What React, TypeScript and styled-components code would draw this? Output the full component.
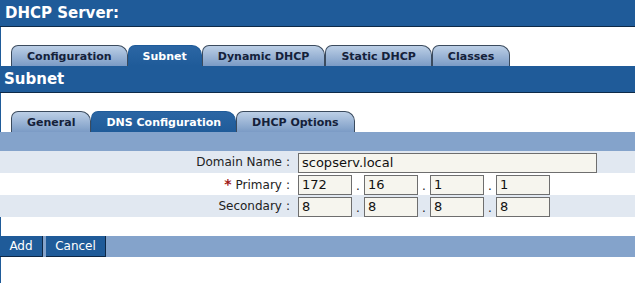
import React from "react";
import styled, { createGlobalStyle, css } from "styled-components";

const Global = createGlobalStyle`
  html, body { margin: 0; padding: 0; background: #ffffff; }
  body { font-family: "DejaVu Sans", Verdana, sans-serif; }
  * { box-sizing: border-box; }
`;

const Page = styled.div`
  width: 635px;
  height: 283px;
  overflow: hidden;
  background: #fff;
`;

const Header = styled.div`
  height: 27px;
  background: #1f5b99;
  border-bottom: 1px solid #0e2a48;
  color: #fff;
  font-weight: bold;
  font-size: 15px;
  padding: 4px 0 0 5px;
`;

const Body = styled.div`
  border-left: 1px solid #1f5b99;
  min-height: 256px;
`;

const TabStrip = styled.div<{ $top: number }>`
  display: flex;
  gap: 0;
  padding: ${(p) => p.$top}px 0 0 10px;
  height: ${(p) => p.$top + 21}px;
`;

const Tab = styled.div<{ $active?: boolean }>`
  height: 21px;
  padding: 0 ${(p) => (p.$active ? "14px" : "15px")};
  display: flex;
  align-items: center;
  justify-content: center;
  font-size: 11px;
  font-weight: bold;
  border: 1px solid #3b4b5e;
  border-bottom: none;
  border-radius: 7px 10px 0 0;
  color: #14213a;
  background: linear-gradient(#bccfe6, #7b9bc5);
  ${(p) =>
    p.$active &&
    css`
      color: #ffffff;
      border-color: #1f5b99;
      background: linear-gradient(#2b66a4, #1f5b99);
    `}
`;

const SectionBar = styled.div`
  height: 27px;
  margin-left: -1px;
  background: #1f5b99;
  border-bottom: 1px solid #0e2a48;
  color: #fff;
  font-weight: bold;
  font-size: 15px;
  padding: 4px 0 0 4px;
`;

const LightBar = styled.div<{ $h: number }>`
  height: ${(p) => p.$h}px;
  margin-left: -1px;
  background: #84a3cb;
  display: flex;
  align-items: stretch;
  gap: 3px;
`;

const Row = styled.div<{ $shade?: boolean }>`
  height: 22px;
  margin-left: -1px;
  display: grid;
  grid-template-columns: 292px 1fr;
  align-items: center;
  background: ${(p) => (p.$shade ? "#e1e8f1" : "#ffffff")};
  font-size: 12px;
  color: #222;
`;

const Label = styled.div`
  text-align: right;
  white-space: nowrap;
  padding-right: 2px;
`;

const Colon = styled.span`
  margin-left: 4px;
`;

const Star = styled.span`
  color: #a01818;
  font-weight: bold;
  font-size: 14px;
  margin-right: 4px;
`;

const Field = styled.div`
  display: flex;
  align-items: center;
  padding: 1px 0 0 6px;
`;

const TextInput = styled.input<{ $w: number }>`
  width: ${(p) => p.$w}px;
  height: 20px;
  border: 1px solid #6e6e6e;
  background: #f6f5ee;
  font-family: "DejaVu Sans", Verdana, sans-serif;
  font-size: 13px;
  color: #111;
  padding: 0 3px;
  margin: 0;
  outline: none;
`;

const Dot = styled.span`
  width: 12px;
  text-align: center;
  font-size: 12px;
  padding-top: 3px;
`;

const Spacer = styled.div`
  height: 19px;
`;

const Button = styled.button<{ $w: number }>`
  width: ${(p) => p.$w}px;
  height: 21px;
  margin: 0;
  border: none;
  border-right: 1px solid #0d2745;
  border-bottom: 1px solid #0d2745;
  background: #1f5b99;
  color: #fff;
  font-family: "DejaVu Sans", Verdana, sans-serif;
  font-size: 12px;
  padding: 0;
`;

const ip = (vals: string[]) => (
  <Field>
    {vals.map((v, i) => (
      <React.Fragment key={i}>
        {i > 0 && <Dot>.</Dot>}
        <TextInput $w={54} defaultValue={v} />
      </React.Fragment>
    ))}
  </Field>
);

export default function App() {
  return (
    <Page>
      <Global />
      <Header>DHCP Server:</Header>
      <Body>
        <TabStrip $top={18}>
          <Tab>Configuration</Tab>
          <Tab $active>Subnet</Tab>
          <Tab>Dynamic DHCP</Tab>
          <Tab>Static DHCP</Tab>
          <Tab>Classes</Tab>
        </TabStrip>
        <SectionBar>Subnet</SectionBar>
        <TabStrip $top={18}>
          <Tab>General</Tab>
          <Tab $active>DNS Configuration</Tab>
          <Tab>DHCP Options</Tab>
        </TabStrip>
        <LightBar $h={19} />
        <Row $shade>
          <Label>
            Domain Name<Colon>:</Colon>
          </Label>
          <Field>
            <TextInput $w={299} defaultValue="scopserv.local" />
          </Field>
        </Row>
        <Row>
          <Label>
            <Star>*</Star>Primary<Colon>:</Colon>
          </Label>
          {ip(["172", "16", "1", "1"])}
        </Row>
        <Row $shade>
          <Label>
            Secondary<Colon>:</Colon>
          </Label>
          {ip(["8", "8", "8", "8"])}
        </Row>
        <Spacer />
        <LightBar $h={21}>
          <Button $w={43}>Add</Button>
          <Button $w={60}>Cancel</Button>
        </LightBar>
      </Body>
    </Page>
  );
}
